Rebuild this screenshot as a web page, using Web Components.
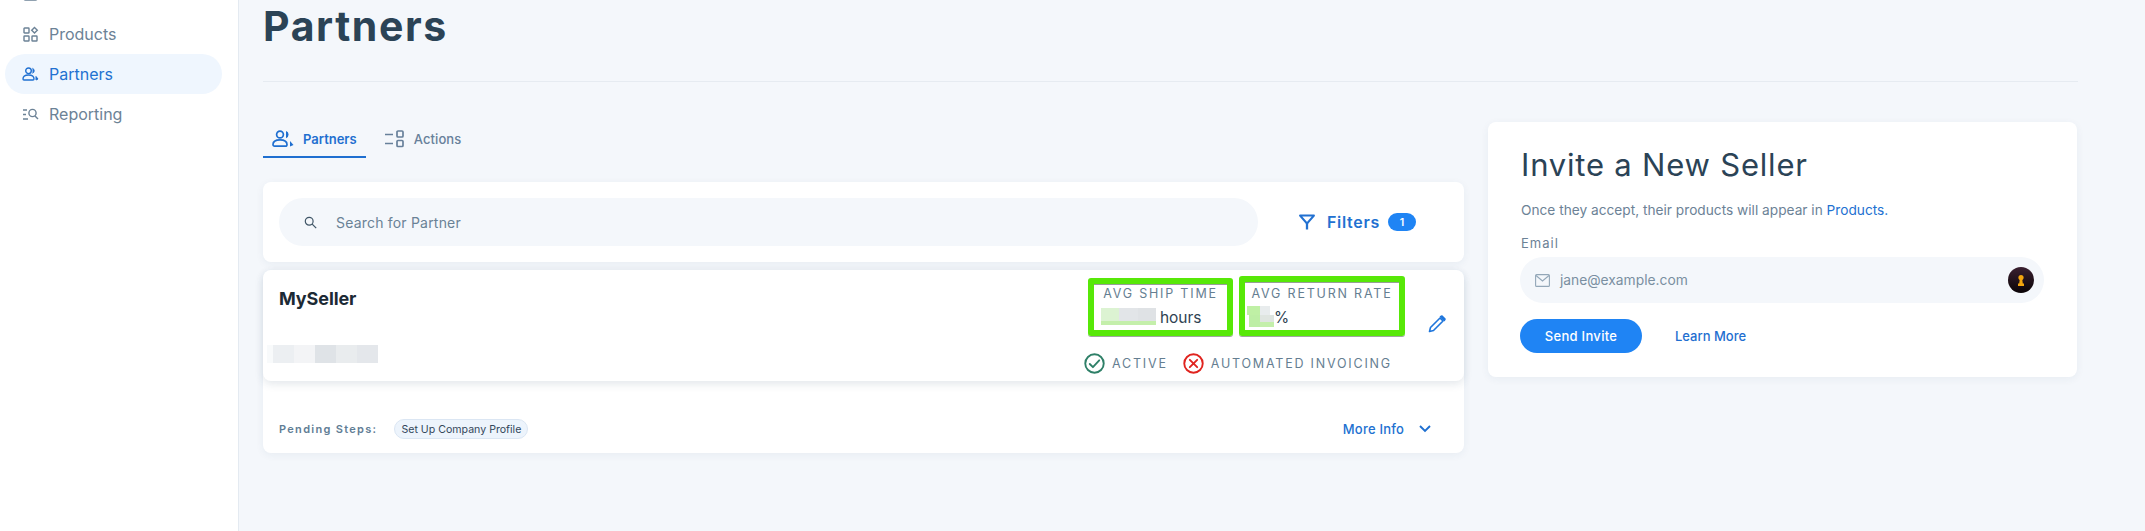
<!DOCTYPE html>
<html>
<head>
<meta charset="utf-8">
<style>
  html, body { margin: 0; height: 100%; }
  body { background: #f4f7fb; font-family: Inter, sans-serif; overflow: hidden; }
</style>
</head>
<body>
<app-shell>
  <side-nav slot="nav"></side-nav>
  <page-title>Partners</page-title>
  <div style="display:grid;grid-template-columns:1201px 589px;column-gap:24px;align-items:start">
    <div>
      <tab-bar></tab-bar>
      <search-bar></search-bar>
      <partner-card name="MySeller"></partner-card>
    </div>
    <invite-card></invite-card>
  </div>
</app-shell>

<script>
const sheet = `
  :host, * { box-sizing: border-box; }
  :host { font-family: Inter, sans-serif; }
  svg { display: block; flex: none; }
`;

class AppShell extends HTMLElement {
  constructor() {
    super();
    this.attachShadow({ mode: 'open' }).innerHTML = `
      <style>
        ${sheet}
        :host { display: flex; height: 531px; }
        main { flex: 1; padding: 0 67px 0 24px; min-width: 0; }
      </style>
      <slot name="nav"></slot>
      <main><slot></slot></main>
    `;
  }
}

class SideNav extends HTMLElement {
  constructor() {
    super();
    this.attachShadow({ mode: 'open' }).innerHTML = `
      <style>
        ${sheet}
        :host { display: block; width: 239px; flex: none; background: #fff; border-right: 1px solid #e4eaf1; padding: 14px 16px 0 5px; overflow: hidden; }
        a { display: flex; align-items: center; height: 40px; padding-left: 17px; gap: 10px; border-radius: 20px; font-size: 16px; color: #6c8296; }
        a.on { background: #eff6fe; color: #2271d1; }
        a.cut { margin-top: -40px; }
        svg { fill: none; stroke: currentColor; stroke-width: 1.4; }
      </style>
      <a class="cut"><svg width="17" height="17" viewBox="0 0 17 17"><rect x="2" y="3" width="13" height="11" rx="1.500"/><path d="M2 7h13"/></svg></a>
      <a><svg width="17" height="17" viewBox="0 0 17 17"><rect x="2" y="2" width="5" height="5" rx=".6"/><rect x="2" y="10" width="5" height="5" rx=".6"/><rect x="10" y="10" width="5" height="5" rx=".6"/><path d="M12.500 1.500l2.800 2.800-2.800 2.800-2.800-2.800z"/></svg>Products</a>
      <a class="on"><svg width="17" height="17" viewBox="0 0 17 17"><circle cx="6.500" cy="4.800" r="2.800"/><path d="M1 13c0-3 2.600-4 5.500-4s5.500 1 5.500 4c0 .6-.4 1-1 1H2c-.6 0-1-.4-1-1z"/><path d="M10.500 2.300a2.700 2.700 0 010 5M14 10.500l2 2.500-2 1z" fill="currentColor" stroke-width="1"/></svg>Partners</a>
      <a><svg width="17" height="17" viewBox="0 0 17 17"><path d="M1 4h4M1 8.500h3M1 13h5"/><circle cx="10.500" cy="7" r="3.600"/><path d="M13 10l3 3"/></svg>Reporting</a>
    `;
  }
}

class PageTitle extends HTMLElement {
  constructor() {
    super();
    this.attachShadow({ mode: 'open' }).innerHTML = `
      <style>
        ${sheet}
        :host { display: block; height: 82px; border-bottom: 1px solid #e6ebf1; }
        h1 { margin: 0; font-size: 41px; line-height: 52px; font-weight: 700; color: #2b4356; letter-spacing: 1.600px; }
      </style>
      <h1><slot></slot></h1>
    `;
  }
}

class TabBar extends HTMLElement {
  constructor() {
    super();
    this.attachShadow({ mode: 'open' }).innerHTML = `
      <style>
        ${sheet}
        :host { display: flex; height: 75px; padding-top: 42px; margin-bottom: 25px; }
        a { display: flex; align-items: center; gap: 9px; height: 34px; padding: 0 9px 3px 9px; font-size: 13px; font-weight: 500; letter-spacing: .1px; color: #67809a; border-bottom: 2px solid transparent; }
        a.on { color: #1f6fd0; font-weight: 600; letter-spacing: 0; border-color: #1f6fd0; }
        a + a { margin-left: 9px; }
        svg { fill: none; stroke: currentColor; stroke-width: 1.700; }
      </style>
      <a class="on"><svg width="22" height="18" viewBox="0 0 22 18"><circle cx="8" cy="4.500" r="3.400"/><path d="M1 14.500c0-3.200 3-4.700 7-4.700s7 1.500 7 4.700c0 1-.6 1.700-1.600 1.700H2.600C1.600 16.200 1 15.500 1 14.500z"/><path d="M14 1a3.800 3.800 0 010 7.200zM18 11l3.500 4-3.500 1.500z" fill="currentColor" stroke="none"/></svg>Partners</a>
      <a><svg width="21" height="18" viewBox="0 0 21 18"><path d="M1 4.500h8M1 13.500h8"/><rect x="13" y="1" width="6" height="6" rx="1"/><rect x="13" y="10.500" width="6" height="6" rx="1"/></svg>Actions</a>
    `;
  }
}

class SearchBar extends HTMLElement {
  constructor() {
    super();
    this.attachShadow({ mode: 'open' }).innerHTML = `
      <style>
        ${sheet}
        :host { display: flex; align-items: center; height: 80px; background: #fff; border-radius: 8px; padding: 0 16px; margin-bottom: 8px; box-shadow: 0 2px 8px rgba(40,70,100,.06); }
        .field { flex: none; width: 979px; height: 48px; border-radius: 24px; background: #f4f7fb; display: flex; align-items: center; padding-left: 25px; gap: 19px; font-size: 14px; color: #6a8296; letter-spacing: .2px; }
        .filter { display: flex; align-items: center; margin-left: 40px; font-size: 16px; font-weight: 600; letter-spacing: .7px; color: #2271d1; }
        .filter svg { margin-right: 11px; }
        .badge { margin-left: 8px; width: 28px; height: 18px; border-radius: 9px; background: #1f84f4; color: #fff; font-size: 10.500px; font-weight: 600; letter-spacing: 0; display: flex; align-items: center; justify-content: center; }
      </style>
      <div class="field">
        <svg width="13" height="13" viewBox="0 0 13 13" fill="none" stroke="#3f5566" stroke-width="1.200"><circle cx="5.200" cy="5.200" r="3.900"/><path d="M8.200 8.200l4 4"/></svg>
        <span>Search for Partner</span>
      </div>
      <div class="filter">
        <svg width="18" height="18" viewBox="0 0 18 18" fill="none" stroke="currentColor" stroke-width="1.900" stroke-linejoin="round"><path d="M2 2.500h14L9 10.500z"/><path d="M9 10v6.500" stroke-width="2.300"/></svg>
        Filters<span class="badge">1</span>
      </div>
    `;
  }
}

class StatBox extends HTMLElement {
  constructor() {
    super();
    this.attachShadow({ mode: 'open' }).innerHTML = `
      <style>
        ${sheet}
        :host { display: block; height: 58px; border: 6px solid #57e808; border-radius: 3px; box-shadow: 0 1px 0 rgba(80,95,80,.55), inset 0 1px 0 rgba(80,95,80,.6); padding-top: 1px; }
        :host([tall]) { height: 60px; margin-top: -2px; padding-top: 3px; }
        .label { font-size: 12.500px; line-height: 17px; letter-spacing: 1.800px; color: #657e91; white-space: nowrap; text-align: center; }
        .val { display: flex; align-items: center; height: 24px; margin-top: 3px; font-size: 15.500px; color: #2f4352; white-space: nowrap; }
      </style>
      <div class="label"><slot name="label"></slot></div>
      <div class="val"><slot></slot></div>
    `;
  }
}

class StatusTag extends HTMLElement {
  constructor() {
    super();
    const ok = this.hasAttribute('ok');
    const color = ok ? '#2f8068' : '#e0241f';
    const mark = ok ? '<path d="M5.500 10.500l3 3 6-6.500"/>' : '<path d="M6.500 6.500l7 7M13.500 6.500l-7 7"/>';
    this.attachShadow({ mode: 'open' }).innerHTML = `
      <style>
        ${sheet}
        :host { display: flex; align-items: center; gap: 7px; font-size: 12.500px; letter-spacing: 1.800px; color: #657e91; white-space: nowrap; }
      </style>
      <svg width="21" height="21" viewBox="0 0 20 20" fill="none" stroke="${color}" stroke-width="1.800" stroke-linecap="round" stroke-linejoin="round"><circle cx="10" cy="10" r="8.800"/>${mark}</svg>
      <slot></slot>
    `;
  }
}

class PartnerCard extends HTMLElement {
  constructor() {
    super();
    const name = this.getAttribute('name');
    this.attachShadow({ mode: 'open' }).innerHTML = `
      <style>
        ${sheet}
        :host { display: block; height: 183px; background: #fff; border-radius: 8px; box-shadow: 0 2px 8px rgba(40,70,100,.06); }
        .top { display: grid; grid-template-columns: 1fr 145px 166px 53px; grid-template-rows: 58px auto; height: 111px; border-radius: 8px; box-shadow: 0 3px 9px rgba(40,70,100,.13); column-gap: 6px; padding: 8px 0 0 16px; }
        .left { grid-row: 1 / 3; }
        .name { font-size: 18px; font-weight: 700; letter-spacing: -.1px; color: #1c2a35; line-height: 24px; padding-top: 9px; box-sizing: content-box; }
        .blur { display: flex; margin: 34px 0 0 -12px; height: 18px; }
        .blur i { width: 21px; height: 18px; }
        .steps { display: flex; align-items: center; height: 20px; margin-top: 38px; padding-left: 16px; font-size: 11px; font-weight: 600; letter-spacing: 1.300px; color: #617d95; }
        .chip { margin-left: 17px; height: 20px; padding: 0 6px; border-radius: 10px; background: #edf4fc; border: 1px solid #dbe6f3; color: #33475a; font-size: 10.600px; font-weight: 400; letter-spacing: 0; display: flex; align-items: center; }
        .more { margin-left: auto; margin-right: 33px; display: flex; align-items: center; gap: 15px; font-size: 13px; font-weight: 500; letter-spacing: .2px; color: #2271d1; }
        .tags { grid-column: 2 / 4; display: flex; gap: 15px; margin: 9px 0 0 -4px; }
        .edit { padding: 37px 0 0 17px; }
        .sw { display: inline-flex; height: 17px; margin: 0 4px 2px 7px; }
        .sw i { width: 18.300px; height: 17px; }
        .sw2 { display: inline-grid; grid-template-columns: 13px 14px; grid-template-rows: 9px 12px; margin: 0 0 2px 2px; }
      </style>
      <div class="top">
        <div class="left">
          <div class="name">${name}</div>
          <div class="blur">
            <i style="background:#f8fafb;width:6px"></i><i style="background:#eceff2"></i><i style="background:#f3f4f6"></i><i style="background:#dfe3e7"></i><i style="background:#e9ecee"></i><i style="background:#e4e7eb"></i>
          </div>
        </div>
        <stat-box>
          <span slot="label">AVG SHIP TIME</span>
          <span class="sw">
            <i style="background:linear-gradient(#dcf3d2 76%,#c4efab 76%)"></i><i style="background:linear-gradient(#e2e5e8 76%,#c4efab 76%)"></i><i style="background:linear-gradient(#dfe2e5 76%,#c4efab 76%)"></i>
          </span>hours
        </stat-box>
        <stat-box tall>
          <span slot="label">AVG RETURN RATE</span>
          <span class="sw2">
            <i style="background:#bff0a5"></i><i style="background:#e8eced;margin-right:4px"></i><i style="background:#bdeea5;margin-left:2px"></i><i style="background:linear-gradient(#dfe5e0 58%,#c4efab 58%)"></i>
          </span>%
        </stat-box>
        <div class="edit">
          <svg width="18" height="18" viewBox="0 0 18 18" fill="none" stroke="#1f76dc" stroke-width="1.600" stroke-linejoin="round"><path d="M1.500 16.500l1-4L12 3l3 3-9.500 9.500z"/><path d="M12.500 1.800l1.500-.8 3 3-.8 1.500z" fill="#1f76dc"/></svg>
        </div>
        <div class="tags">
          <status-tag ok>ACTIVE</status-tag>
          <status-tag>AUTOMATED INVOICING</status-tag>
        </div>
      </div>
      <div class="steps">
        Pending Steps:
        <span class="chip">Set Up Company Profile</span>
        <span class="more">More Info
          <svg width="12" height="8" viewBox="0 0 12 8" fill="none" stroke="#1f6fd0" stroke-width="1.900"><path d="M1 1l5 5 5-5"/></svg>
        </span>
      </div>
    `;
  }
}

class InviteCard extends HTMLElement {
  constructor() {
    super();
    this.attachShadow({ mode: 'open' }).innerHTML = `
      <style>
        ${sheet}
        :host { display: block; height: 255px; margin-top: 40px; background: #fff; border-radius: 8px; padding: 0 33px; box-shadow: 0 2px 8px rgba(40,70,100,.06); }
        h2 { margin: 0; padding-top: 23px; font-size: 31px; line-height: 40px; box-sizing: content-box; font-weight: 400; color: #2b4356; letter-spacing: .8px; }
        p { margin: 15px 0 0; font-size: 13.700px; line-height: 20px; color: #6c8296; }
        p a { color: #2271d1; }
        label { display: block; margin-top: 13px; font-size: 13px; line-height: 20px; letter-spacing: 1px; color: #6c8296; }
        .field { display: flex; align-items: center; width: 524px; height: 46px; margin: 4px 0 0 -1px; border-radius: 23px; background: #f4f7fb; padding: 0 10px 0 15px; font-size: 13.800px; color: #7a8fa1; }
        .field svg.mail { margin-right: 10px; }
        .key { margin-left: auto; width: 26px; height: 26px; border-radius: 50%; background: linear-gradient(#3a2030, #0a0406); display: flex; align-items: center; justify-content: center; }
        .row { display: flex; align-items: center; margin: 16px 0 0 -1px; }
        .send { width: 122px; height: 34px; border-radius: 17px; background: #1f84f4; color: #fff; font-size: 13px; font-weight: 500; letter-spacing: .3px; display: flex; align-items: center; justify-content: center; }
        .learn { margin-left: 33px; font-size: 13px; font-weight: 500; color: #1f6fd0; }
      </style>
      <h2>Invite a New Seller</h2>
      <p>Once they accept, their products will appear in <a>Products.</a></p>
      <label>Email</label>
      <div class="field">
        <svg class="mail" width="15" height="13" viewBox="0 0 15 13" fill="none" stroke="#93a7b8" stroke-width="1.100"><rect x=".6" y=".6" width="13.800" height="11.800" rx="1"/><path d="M1 1.500l6.500 5.500L14 1.500"/></svg>
        jane@example.com
        <span class="key"><svg width="8" height="12" viewBox="0 0 8 12" fill="#f3a50f"><circle cx="4" cy="3.500" r="2.600"/><path d="M2.800 5h2.400l.6 4.500H7V12H1V9.500h1.200z"/></svg></span>
      </div>
      <div class="row">
        <span class="send">Send Invite</span>
        <span class="learn">Learn More</span>
      </div>
    `;
  }
}

customElements.define('app-shell', AppShell);
customElements.define('side-nav', SideNav);
customElements.define('page-title', PageTitle);
customElements.define('tab-bar', TabBar);
customElements.define('search-bar', SearchBar);
customElements.define('stat-box', StatBox);
customElements.define('status-tag', StatusTag);
customElements.define('partner-card', PartnerCard);
customElements.define('invite-card', InviteCard);
</script>
</body>
</html>
